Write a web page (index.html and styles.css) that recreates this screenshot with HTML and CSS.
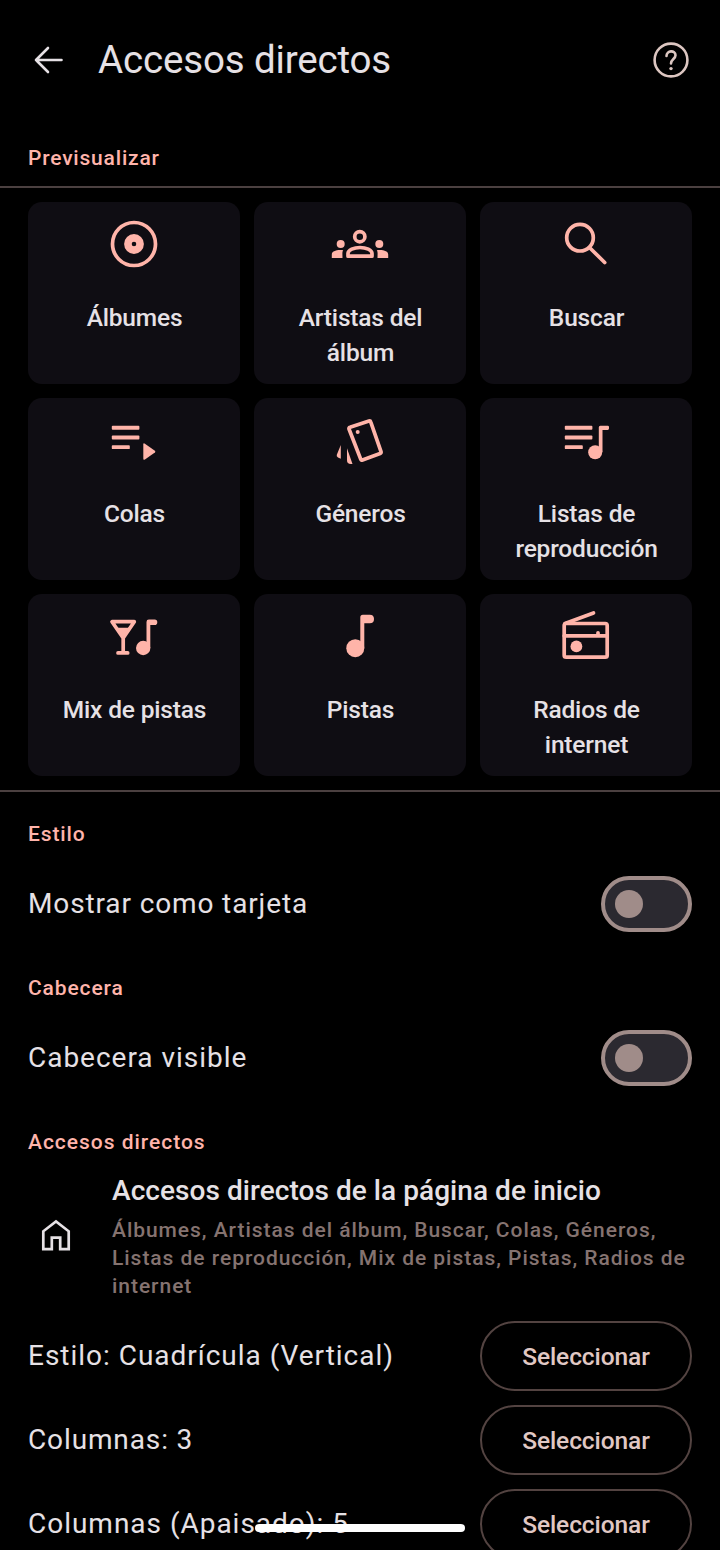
FILE: index.html
```html
<!DOCTYPE html>
<html lang="es">
<head>
<meta charset="utf-8">
<title>Accesos directos</title>
<link rel="stylesheet" href="styles.css">
</head>
<body>
<main class="screen">
  <header class="topbar">
    <svg class="back" viewBox="0 0 42 42"><path d="M33.500 21H8M20 9 8 21l12 12"/></svg>
    <h1 class="title">Accesos directos</h1>
    <svg class="help" viewBox="0 0 42 42"><circle cx="21" cy="21" r="16.4"/><path d="M16.500 17c0-6 9-6 9-.8 0 3.600-4.500 4-4.500 8.300"/><circle class="solid" cx="21" cy="29.600" r="1.700"/></svg>
  </header>

  <h2 class="section preview-title">Previsualizar</h2>
  <section class="grid">
    <div class="card">
      <svg class="icon" viewBox="0 0 60 60"><circle cx="30" cy="30" r="21.500"/><circle cx="30" cy="30" r="6.100" stroke-width="7.600"/></svg>
      <p>Álbumes</p>
    </div>
    <div class="card">
      <svg class="icon" viewBox="0 0 60 60"><circle cx="29.800" cy="22.700" r="5.100"/><path d="M18 42.200v-2.700c0-3.500 6-6 12-6s12 2.500 12 6v2.700z"/><g class="solid"><circle cx="10.700" cy="30" r="4"/><circle cx="49.300" cy="30" r="4"/><path d="M1.800 44v-3.500C1.800 37.500 6 35.600 13.200 36.200 12 38 12.500 40 12.500 44zM58.200 44v-3.500c0-3-4.200-4.900-11.400-4.300 1.200 1.800.7 3.800.7 7.800z"/></g></svg>
      <p>Artistas del álbum</p>
    </div>
    <div class="card">
      <svg class="icon" viewBox="0 0 60 60"><circle cx="24" cy="23.700" r="13.300"/><path d="M33.700 33.700 48.700 48.500"/></svg>
      <p>Buscar</p>
    </div>
    <div class="card">
      <svg class="icon" viewBox="0 0 60 60"><g class="solid"><rect x="7.800" y="15.800" width="27.600" height="3.900" rx=".9"/><rect x="7.800" y="25.500" width="27.600" height="3.900" rx=".9"/><rect x="7.800" y="35.200" width="18" height="3.900" rx=".9"/><path d="M39.300 34.500q0-1.800 1.600-.8l10 7q1 .9 0 1.800l-10 7q-1.600 1-1.600-.8z"/></g></svg>
      <p>Colas</p>
    </div>
    <div class="card">
      <svg class="icon" viewBox="0 0 60 60"><path d="M20 17.300 39 10.900q1.300-.4 1.700.9l10.300 29.800q.4 1.300-.9 1.800l-17.600 6.700q-1.300.5-1.700-.8L19 19q-.4-1.300 1-1.700z"/><g class="solid"><circle cx="27.700" cy="22" r="2"/><path d="M10.800 35v13.800l-2.800-1.300q-1.800-1-1.200-2.700zM17 38.300 22.500 54h-1.700q-3.800 0-3.800-3.800z"/></g></svg>
      <p>Géneros</p>
    </div>
    <div class="card">
      <svg class="icon" viewBox="0 0 60 60"><g class="solid"><rect x="8.800" y="15.800" width="27.600" height="3.900" rx=".9"/><rect x="8.800" y="25.500" width="27.600" height="3.900" rx=".9"/><rect x="8.800" y="35.200" width="18" height="3.900" rx=".9"/><circle cx="39.200" cy="42.200" r="7"/><path d="M42.800 42V17.200q0-1.500 1.500-1.500h7.400q1.300 0 1.300 1.300v1.600q0 1.300-1.300 1.300h-5.200V42z"/></g></svg>
      <p>Listas de reproducción</p>
    </div>
    <div class="card">
      <svg class="icon" viewBox="0 0 60 60"><path d="M8 15.700h22.300L19.200 32zM19.200 31v15.800M14 46.900h9.700"/><g class="solid"><path d="M12.500 21.700h13.300L19.200 32z"/><circle cx="39.200" cy="42" r="7.200"/><path d="M42.500 42V16q0-2.400 2.400-2.400h5.800q2.600 0 2.600 2.600 0 2.800-2.600 2.800h-4.400V42z"/></g></svg>
      <p>Mix de pistas</p>
    </div>
    <div class="card">
      <svg class="icon" viewBox="0 0 60 60"><g class="solid"><circle cx="25.300" cy="42.200" r="9"/><path d="M30.300 42V11.200q0-2.500 2.500-2.500h7q4.200 0 4.200 4.300t-4.200 4.300h-5.500V42z"/></g></svg>
      <p>Pistas</p>
    </div>
    <div class="card">
      <svg class="icon" viewBox="0 0 60 60"><rect x="8.200" y="17.500" width="43" height="33.700" rx="2"/><path d="M8.200 29.800h43M42 29.800v-3M9 17.500 37.500 7"/><circle class="solid" cx="20.400" cy="40.400" r="5.900"/></svg>
      <p>Radios de internet</p>
    </div>
  </section>

  <h2 class="section">Estilo</h2>
  <div class="row switch-row"><span>Mostrar como tarjeta</span><span class="switch"></span></div>
  <h2 class="section">Cabecera</h2>
  <div class="row switch-row"><span class="wide">Cabecera visible</span><span class="switch"></span></div>
  <h2 class="section wide">Accesos directos</h2>

  <div class="item">
    <svg class="home" viewBox="0 0 42 42"><path d="M8.300 34.200V16.300L21 6.500l12.700 9.800v17.900h-8.500V22.600h-8.400v11.600z"/></svg>
    <div class="item-text">
      <h3>Accesos directos de la página de inicio</h3>
      <p>Álbumes, Artistas del álbum, Buscar, Colas, Géneros, Listas de reproducción, Mix de pistas, Pistas, Radios de internet</p>
    </div>
  </div>

  <div class="row"><span class="wide">Estilo: Cuadrícula (Vertical)</span><button class="select">Seleccionar</button></div>
  <div class="row"><span>Columnas: 3</span><button class="select">Seleccionar</button></div>
  <div class="row"><span class="wide">Columnas (Apaisado): 5</span><button class="select">Seleccionar</button></div>
  <div class="home-bar"></div>
</main>
</body>
</html>
```

FILE: styles.css
```css
* { box-sizing: border-box; }
body { margin: 0; background: #000; color: #e6e1e5; font-family: Roboto, sans-serif; }
h1, h2, h3, p { margin: 0; }
.screen { position: relative; width: 720px; height: 1550px; overflow: hidden; }
svg { display: block; flex: none; fill: none; stroke-linecap: round; stroke-linejoin: round; }

.topbar { display: flex; align-items: center; height: 120px; padding: 0 28px; }
.back { width: 42px; height: 42px; stroke: #e6e1e5; stroke-width: 2.6; }
.title { flex: 1; margin-left: 28px; padding-bottom: 2px; font-size: 38.5px; line-height: 49px; font-weight: 400; letter-spacing: -.15px; }
.help { width: 42px; height: 42px; stroke: #dcc6c1; stroke-width: 2.6; }
.help .solid { fill: #dcc6c1; stroke: none; }

.section { height: 28px; padding-left: 28px; color: #ffb4ab; font-size: 21px; line-height: 28px; font-weight: 500; letter-spacing: .875px; }
.preview-title { margin: 24px 0 14px; letter-spacing: .8px; }

.grid { display: grid; grid-template-columns: repeat(3, 1fr); grid-auto-rows: 182px; gap: 14px; padding: 14px 28px; margin-bottom: 28px; border: solid #4b4040; border-width: 2px 0; }
.card { display: flex; flex-direction: column; align-items: center; padding: 12px 24px 0; background: #0f0d13; border-radius: 14px; }
.card p { margin-top: 26px; padding-left: 1px; font-size: 24.5px; line-height: 35px; font-weight: 500; letter-spacing: -.18px; text-align: center; }
.icon { width: 60px; height: 60px; stroke: #ffb4a9; stroke-width: 3.7; }
.icon .solid { fill: #ffb4a9; stroke: none; }

.row { display: flex; align-items: center; justify-content: space-between; height: 84px; padding: 0 28px; font-size: 28px; line-height: 42px; letter-spacing: .875px; }
.wide { letter-spacing: .98px; }
.switch-row { height: 112px; margin-bottom: 14px; }
.switch { display: flex; align-items: center; width: 91px; height: 56px; padding-left: 10px; background: #2b2930; border: 4px solid #a08c89; border-radius: 28px; }
.switch::before { content: ""; width: 28px; height: 28px; border-radius: 50%; background: #a08c89; }

.item { display: flex; align-items: center; height: 158px; padding: 0 28px 0 35px; }
.home { width: 42px; height: 42px; margin: 2px 35px 0 0; stroke: #e6e1e5; stroke-width: 2.7; stroke-linejoin: miter; }
.item h3 { font-size: 28px; line-height: 42px; font-weight: 500; letter-spacing: .06px; white-space: nowrap; }
.item p { margin-top: 4px; color: #857370; font-size: 21px; line-height: 28px; font-weight: 500; letter-spacing: .96px; }

.select { width: 212px; height: 70px; padding: 0; color: #e0c8c4; background: none; border: 2px solid #534341; border-radius: 35px; font: 500 24.5px/35px Roboto, sans-serif; letter-spacing: -.08px; }
.home-bar { position: absolute; left: 255px; top: 1524px; width: 210px; height: 8px; border-radius: 4px; background: #fff; }
```
